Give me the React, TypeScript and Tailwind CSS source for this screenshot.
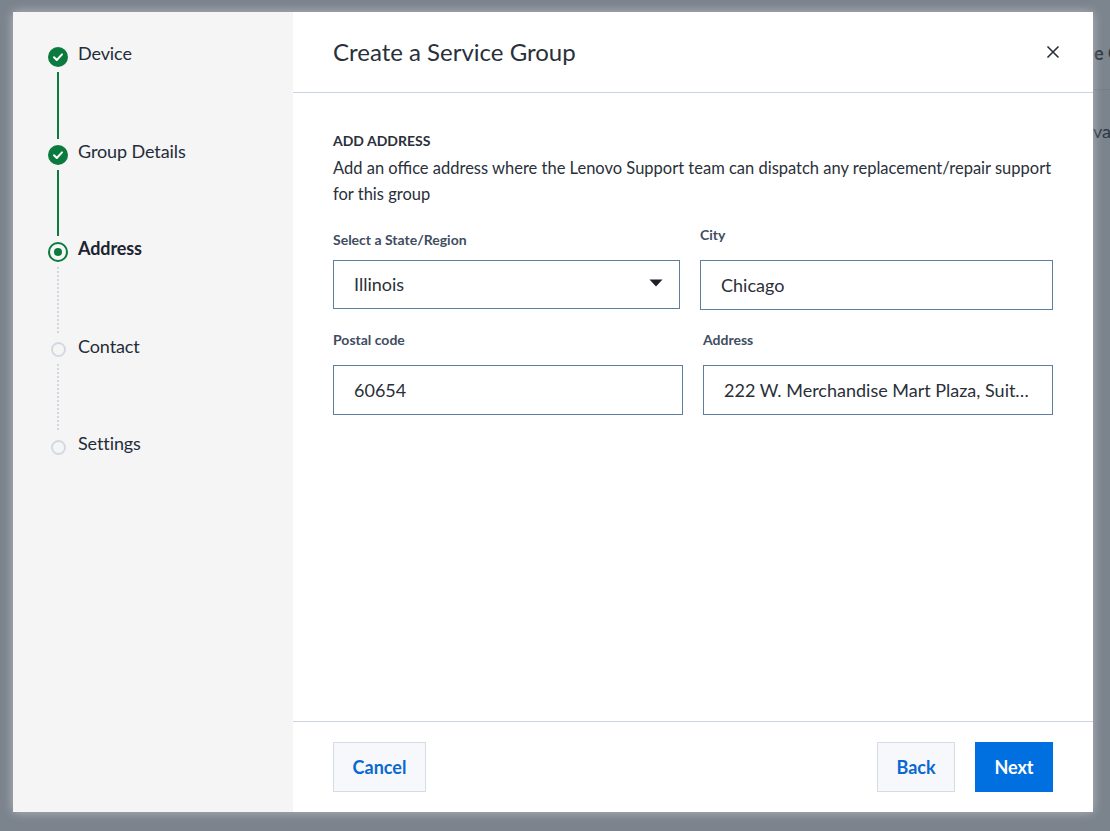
import React from "react";

const font = { fontFamily: "Lato, 'Liberation Sans', sans-serif" };

function Check() {
  return (
    <span className="flex h-5 w-5 items-center justify-center rounded-full bg-[#0b7a3e]">
      <svg width="12" height="12" viewBox="0 0 12 12" fill="none">
        <path d="M2 6.2 4.8 9 10 3.4" stroke="#fff" strokeWidth="2" strokeLinecap="round" strokeLinejoin="round" />
      </svg>
    </span>
  );
}

function Step({ label, state, last }: { label: string; state: "done" | "current" | "todo"; last?: boolean }) {
  return (
    <div className="flex h-[97.5px] gap-2.5">
      <div className="flex w-5 flex-col items-center pt-1.5">
        <div className="flex h-5 w-5 items-center justify-center">
          {state === "done" && <Check />}
          {state === "current" && (
            <span className="flex h-5 w-5 items-center justify-center rounded-full border-2 border-[#0b7a3e]">
              <span className="h-2 w-2 rounded-full bg-[#0b7a3e]" />
            </span>
          )}
          {state === "todo" && <span className="h-[15px] w-[15px] rounded-full border-2 border-[#d3d9e3]" />}
        </div>
        {!last &&
          (state === "done" ? (
            <span className="mt-[5px] h-[68px] w-0.5 bg-[#0b7a3e]" />
          ) : (
            <span className="mt-[5px] h-[68px] w-0.5 bg-[repeating-linear-gradient(to_bottom,#d0d6e0_0,#d0d6e0_2px,transparent_2px,transparent_4px)]" />
          ))}
      </div>
      <span className={`text-[18px] leading-6 tracking-[-0.1px] ${state === "current" ? "font-bold text-[#1c2430]" : "text-[#242c3a]"}`}>
        {label}
      </span>
    </div>
  );
}

function Field({ label, value, className }: { label: string; value: string; className: string }) {
  return (
    <div className={className}>
      <label className="mb-[15px] block text-[14px] font-bold leading-5 text-[#414d5f]">{label}</label>
      <input
        readOnly
        value={value}
        style={font}
        className="block h-[50px] w-full truncate border border-[#5f7d9f] bg-white px-5 text-[18px] text-[#2a3038] outline-none"
      />
    </div>
  );
}

export default function App() {
  return (
    <div style={font} className="relative h-[831px] w-[1110px] overflow-hidden bg-[#7b838d]">
      <div className="absolute right-0 top-0 h-[90px] w-[17px] border-b border-[#747c86] bg-[#7c848e] pt-[41px] text-[18px] font-bold leading-6 text-[#2e3640]">
        <span className="block whitespace-nowrap pl-[1px]">e C</span>
      </div>
      <div className="absolute right-0 top-[119px] w-[17px] overflow-hidden whitespace-nowrap text-[18px] leading-6 text-[#2e3640]">
        vai
      </div>
      <div className="pl-[13px] pt-3">
        <div className="relative flex h-[800px] w-[1080px] bg-white shadow-[0_0_10px_rgba(255,255,255,0.45)]">
          <aside className="w-[280px] shrink-0 bg-[#f5f5f5] pl-[35px] pt-[29px]">
            <Step label="Device" state="done" />
            <Step label="Group Details" state="done" />
            <Step label="Address" state="current" />
            <Step label="Contact" state="todo" />
            <Step label="Settings" state="todo" last />
          </aside>
          <main className="flex min-w-0 flex-1 flex-col">
            <header className="flex h-[81px] items-center justify-between border-b border-[#cbd3de] pl-10 pr-[33px]">
              <h1 className="text-[24px] font-normal text-[#2a303a]">Create a Service Group</h1>
              <svg width="14" height="14" viewBox="0 0 14 14" fill="none" className="mb-[1px]">
                <path d="M1.5 1.5 12.5 12.5M12.5 1.5 1.5 12.5" stroke="#2a303a" strokeWidth="1.6" />
              </svg>
            </header>
            <section className="flex-1 px-10 pt-[38px]">
              <h2 className="text-[14px] font-bold leading-5 text-[#2a303a]">ADD ADDRESS</h2>
              <p className="mt-1 text-[16.5px] leading-[26px] text-[#2a303a]">
                Add an office address where the Lenovo Support team can dispatch any replacement/repair support for this group
              </p>
              <div className="mt-[18px] flex gap-5">
                <div className="w-[347px] pt-[5px]">
                  <label className="mb-2.5 block text-[14px] font-bold leading-5 text-[#414d5f]">Select a State/Region</label>
                  <div className="flex h-[49px] items-center justify-between border border-[#5f7d9f] pl-5 pr-4 text-[18px] text-[#2a3038]">
                    <span>Illinois</span>
                    <svg width="14" height="8" viewBox="0 0 14 8" className="mb-[3px]">
                      <path d="M0.5 0.5h13L7 7.5z" fill="#1c2028" />
                    </svg>
                  </div>
                </div>
                <Field label="City" value="Chicago" className="flex-1" />
              </div>
              <div className="mt-5 flex gap-5">
                <Field label="Postal code" value="60654" className="flex-1" />
                <Field label="Address" value="222 W. Merchandise Mart Plaza, Suite 1800" className="flex-1" />
              </div>
            </section>
            <footer className="flex h-[91px] items-center justify-between border-t border-[#cbd3de] px-10">
              <button className="h-[50px] w-[93px] border border-[#d5dce6] bg-[#f6f8fb] text-[18px] font-bold text-[#0b68d0]">Cancel</button>
              <div className="flex gap-5">
                <button className="h-[50px] w-[78px] border border-[#d5dce6] bg-[#f6f8fb] text-[18px] font-bold text-[#0b68d0]">Back</button>
                <button className="h-[50px] w-[78px] bg-[#0070e0] text-[18px] font-bold text-white">Next</button>
              </div>
            </footer>
          </main>
        </div>
      </div>
    </div>
  );
}
